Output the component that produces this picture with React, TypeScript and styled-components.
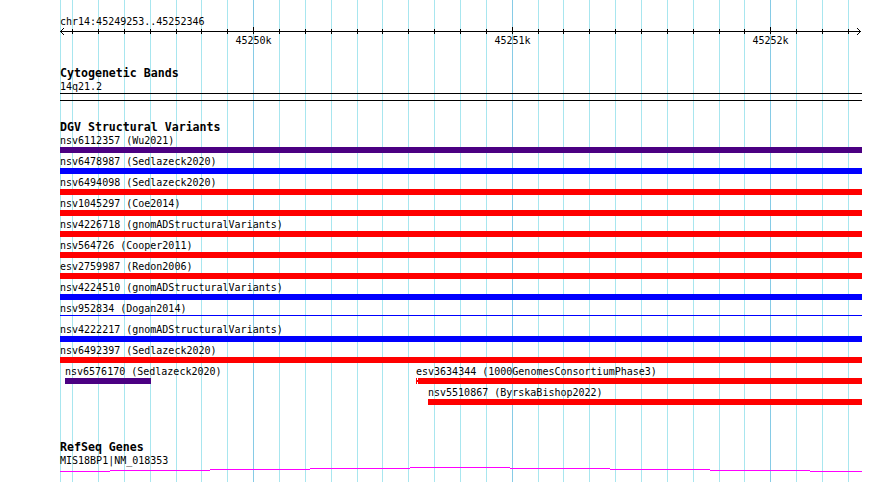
import React from 'react'
import styled, { createGlobalStyle } from 'styled-components'

const START = 45249253
const TRACK_X = 60
const TRACK_W = 802
const PX_PER_BP = 0.2586

const INDIGO = '#4b0082'
const BLUE = '#0000ff'
const RED = '#ff0000'

const GlobalStyle = createGlobalStyle`
  html, body {
    margin: 0;
    padding: 0;
    background: #fff;
  }
`

// bp -> px inside the track area, clipped to it
const toX = (bp: number) => Math.min(TRACK_W, Math.max(0, Math.round((bp - START) * PX_PER_BP)))

// grid every 100bp, first at 45249300
const gridX = Array.from({ length: 31 }, (_, k) => Math.floor(72.6 + k * 25.86))
const majors: Record<number, string> = { 7: '45250k', 17: '45251k', 27: '45252k' }

type Feature = { name: string; start: number; end: number; color: string; thin?: boolean; notched?: boolean }

const FAR_LEFT = 45240000
const FAR_RIGHT = 45260000

const rows: Feature[][] = [
  [{ name: 'nsv6112357 (Wu2021)', start: FAR_LEFT, end: FAR_RIGHT, color: INDIGO }],
  [{ name: 'nsv6478987 (Sedlazeck2020)', start: FAR_LEFT, end: FAR_RIGHT, color: BLUE }],
  [{ name: 'nsv6494098 (Sedlazeck2020)', start: FAR_LEFT, end: FAR_RIGHT, color: RED }],
  [{ name: 'nsv1045297 (Coe2014)', start: FAR_LEFT, end: FAR_RIGHT, color: RED }],
  [{ name: 'nsv4226718 (gnomADStructuralVariants)', start: FAR_LEFT, end: FAR_RIGHT, color: RED }],
  [{ name: 'nsv564726 (Cooper2011)', start: FAR_LEFT, end: FAR_RIGHT, color: RED }],
  [{ name: 'esv2759987 (Redon2006)', start: FAR_LEFT, end: FAR_RIGHT, color: RED }],
  [{ name: 'nsv4224510 (gnomADStructuralVariants)', start: FAR_LEFT, end: FAR_RIGHT, color: BLUE }],
  [{ name: 'nsv952834 (Dogan2014)', start: FAR_LEFT, end: FAR_RIGHT, color: BLUE, thin: true }],
  [{ name: 'nsv4222217 (gnomADStructuralVariants)', start: FAR_LEFT, end: FAR_RIGHT, color: BLUE }],
  [{ name: 'nsv6492397 (Sedlazeck2020)', start: FAR_LEFT, end: FAR_RIGHT, color: RED }],
  [
    { name: 'nsv6576170 (Sedlazeck2020)', start: 45249273, end: 45249605, color: INDIGO },
    { name: 'esv3634344 (1000GenomesConsortiumPhase3)', start: 45250630, end: FAR_RIGHT, color: RED, notched: true },
  ],
  [{ name: 'nsv5510867 (ByrskaBishop2022)', start: 45250676, end: FAR_RIGHT, color: RED }],
]

// intron line of the gene, one level per 100px
const waveLevels = [4, 3, 2, 1, 0, 1, 2, 3, 4]
const waveEdges = [0, 50, 150, 250, 350, 450, 550, 650, 750, TRACK_W]

const Page = styled.div`
  position: relative;
  width: 890px;
  height: 482px;
  overflow: hidden;
  background: #fff;
  color: #000;
  font-family: 'DejaVu Sans Mono', 'Liberation Mono', monospace;
  font-size: 10px;
`

const GridLayer = styled.svg`
  position: absolute;
  inset: 0;
  z-index: 0;
`

const Tracks = styled.div`
  position: relative;
  z-index: 1;
  width: ${TRACK_W}px;
  margin-left: ${TRACK_X}px;
`

const RulerTitle = styled.div`
  padding-top: 16px;
  line-height: 12px;
  white-space: nowrap;
`

const Scale = styled.div`
  position: relative;
  height: 22px;
`

const ScaleDrawing = styled.svg`
  display: block;
  overflow: visible;
`

const TickLabel = styled.span`
  position: absolute;
  top: 7px;
  line-height: 12px;
  transform: translateX(-50%);
  white-space: nowrap;
`

const Section = styled.section<{ $gap: number }>`
  margin-top: ${(p) => p.$gap}px;
`

const TrackTitle = styled.h3`
  margin: 0;
  font-size: 11.6px;
  font-weight: bold;
  line-height: 14px;
  white-space: nowrap;
`

const TrackLabel = styled.div`
  margin-top: 1px;
  line-height: 12px;
  white-space: nowrap;
`

const Band = styled.div`
  height: 6px;
  border-top: 1px solid #000;
  border-bottom: 1px solid #000;
`

const Rows = styled.div`
  margin-top: 1px;
`

const Row = styled.div`
  position: relative;
  height: 21px;
`

const FeatureBox = styled.div`
  position: absolute;
  top: 0;
`

const FeatureLabel = styled.div`
  line-height: 12px;
  white-space: nowrap;
`

const Bar = styled.div<{ $color: string; $thin?: boolean }>`
  position: relative;
  height: ${(p) => (p.$thin ? 1 : 6)}px;
  background: ${(p) => p.$color};
`

const Notch = styled.span`
  position: absolute;
  left: 1px;
  top: 0;
  width: 1px;
  height: 2px;
  border-top: 2px solid #fff;
  border-bottom: 2px solid #fff;
`

const GeneWave = styled.svg`
  display: block;
`

const Grid = () => (
  <GridLayer width={890} height={482} shapeRendering="crispEdges">
    <line x1={60.5} y1={0} x2={60.5} y2={482} stroke="#a8e6ef" />
    {gridX.map((x, k) => (
      <line key={k} x1={x + 0.5} y1={0} x2={x + 0.5} y2={482} stroke={majors[k] ? '#86cbe6' : '#a8e6ef'} />
    ))}
  </GridLayer>
)

const Ruler = () => (
  <>
    <RulerTitle>chr14:45249253..45252346</RulerTitle>
    <Scale>
      <ScaleDrawing width={TRACK_W} height={8} shapeRendering="crispEdges">
        <line x1={0} y1={3.5} x2={801} y2={3.5} stroke="#000" />
        {gridX.map((x, k) => (
          <line key={k} x1={x - TRACK_X + 0.5} y1={majors[k] ? -1 : 1} x2={x - TRACK_X + 0.5} y2={6} stroke="#000" />
        ))}
        <polyline points="4,0 0.5,3.5 4,7" fill="none" stroke="#000" shapeRendering="auto" />
        <polyline points="797,0 800.5,3.5 797,7" fill="none" stroke="#000" shapeRendering="auto" />
      </ScaleDrawing>
      {gridX.map((x, k) =>
        majors[k] ? (
          <TickLabel key={k} style={{ left: x - TRACK_X + 0.5 }}>
            {majors[k]}
          </TickLabel>
        ) : null
      )}
    </Scale>
  </>
)

const App = () => {
  return (
    <Page>
      <GlobalStyle />
      <Grid />
      <Tracks>
        <Ruler />

        <Section $gap={16}>
          <TrackTitle>Cytogenetic Bands</TrackTitle>
          <TrackLabel>14q21.2</TrackLabel>
          <Band />
        </Section>

        <Section $gap={19}>
          <TrackTitle>DGV Structural Variants</TrackTitle>
          <Rows>
            {rows.map((row, i) => (
              <Row key={i}>
                {row.map((f) => {
                  const x = toX(f.start)
                  return (
                    <FeatureBox key={f.name} style={{ left: x, width: toX(f.end) - x }}>
                      <FeatureLabel>{f.name}</FeatureLabel>
                      <Bar $color={f.color} $thin={f.thin}>
                        {f.notched && <Notch />}
                      </Bar>
                    </FeatureBox>
                  )
                })}
              </Row>
            ))}
          </Rows>
        </Section>

        <Section $gap={32}>
          <TrackTitle>RefSeq Genes</TrackTitle>
          <TrackLabel>MIS18BP1|NM_018353</TrackLabel>
          <GeneWave width={TRACK_W} height={6} shapeRendering="crispEdges">
            <path
              d={waveLevels.map((lv, i) => `M${waveEdges[i]} ${lv + 0.5}H${waveEdges[i + 1]}`).join('')}
              stroke="#ff00ff"
              fill="none"
            />
          </GeneWave>
        </Section>
      </Tracks>
    </Page>
  )
}

export default App
